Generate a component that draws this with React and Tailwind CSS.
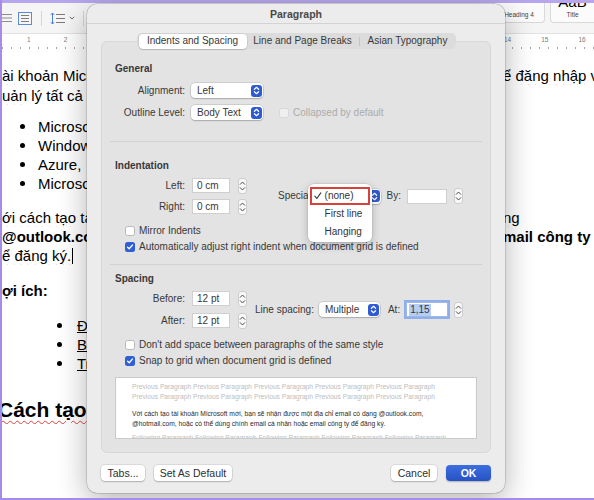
import React from "react";

const sans = "font-['Liberation_Sans',Arial,sans-serif]";
const wavy = "underline decoration-wavy decoration-[#e0443e] decoration-1 underline-offset-[3px]";

// little ^/v stepper that sits next to numeric fields
function Stepper() {
    return (
        <div className="flex h-[16px] w-[9px] shrink-0 items-center justify-center rounded-[3px] border border-[#cdcdcd] bg-[#f8f8f8]">
            <svg width="7" height="12" viewBox="0 0 7 12" fill="none" stroke="#4d4d4d" strokeWidth="1" strokeLinecap="round" strokeLinejoin="round">
                <path d="M1.3 4.3 3.5 2 5.7 4.3" />
                <path d="M1.3 7.7 3.5 10 5.7 7.7" />
            </svg>
        </div>
    );
}

function Arrows() {
    return (
        <span className="flex h-[12px] w-[11px] shrink-0 items-center justify-center rounded-[3px] bg-[#2e5bd1]">
            <svg width="7" height="9" viewBox="0 0 7 9" fill="none" stroke="#fff" strokeWidth="1.2" strokeLinecap="round" strokeLinejoin="round">
                <path d="M1.4 3.3 3.5 1.3 5.6 3.3" />
                <path d="M1.4 5.7 3.5 7.7 5.6 5.7" />
            </svg>
        </span>
    );
}

function Select({ value, className = "", children }) {
    return (
        <div className={`relative flex h-[15px] shrink-0 items-center justify-between rounded-[4px] bg-white pl-[6px] pr-[1px] shadow-[0_0_0_0.5px_rgba(0,0,0,0.18),0_1px_1.5px_rgba(0,0,0,0.18)] ${className}`}>
            <span>{value}</span>
            <Arrows />
            {children}
        </div>
    );
}

function Field({ value, className = "" }) {
    return (
        <div className={`flex h-[15px] shrink-0 items-center border border-[#cfcfcf] bg-white pl-[4px] ${className}`}>{value}</div>
    );
}

function Check({ on, off }) {
    if (on) {
        return (
            <span className="flex h-[10px] w-[10px] shrink-0 items-center justify-center rounded-[2.5px] bg-[#2f5fd6]">
                <svg width="8" height="8" viewBox="0 0 8 8" fill="none" stroke="#fff" strokeWidth="1.4" strokeLinecap="round" strokeLinejoin="round">
                    <path d="M1.6 4.2 3.2 5.8 6.4 2.1" />
                </svg>
            </span>
        );
    }
    return <span className={`block h-[10px] w-[10px] shrink-0 rounded-[2.5px] border ${off ? "border-[#d8d8d8] bg-[#efefef]" : "border-[#b8b8b8] bg-white"}`} />;
}

function Label({ children }) {
    return <span className="w-[75px] shrink-0 text-right">{children}</span>;
}

function NumRow({ label, value }) {
    return (
        <div className="flex h-[15px] items-center">
            <Label>{label}</Label>
            <Field value={value} className="ml-[7px] w-[38px]" />
            <div className="ml-[8px]"><Stepper /></div>
        </div>
    );
}

function Btn({ children, className = "" }) {
    return (
        <div className={`flex h-[16px] items-center justify-center rounded-[4px] bg-white text-[10.5px] text-[#2e2e2e] shadow-[0_0_0_0.5px_rgba(0,0,0,0.15),0_1px_1.5px_rgba(0,0,0,0.2)] ${className}`}>
            {children}
        </div>
    );
}

function Row({ left, right, h = "h-[19px]", className = "" }) {
    return (
        <div className={`flex items-center ${h} ${className}`}>
            <div className="w-[100px] shrink-0 overflow-hidden whitespace-nowrap">{left}</div>
            <div className="ml-auto w-[91px] shrink-0 overflow-hidden whitespace-nowrap">{right}</div>
        </div>
    );
}

function Bullet({ children, indent = "pl-[18px]", gap = "ml-[13px]" }) {
    return (
        <div className={`flex items-center ${indent}`}>
            <span className="h-[5px] w-[5px] shrink-0 rounded-full bg-black" />
            <span className={`shrink-0 ${gap}`}>{children}</span>
        </div>
    );
}

const prev = "Previous Paragraph Previous Paragraph Previous Paragraph Previous Paragraph Previous Paragraph";
const follow = "Following Paragraph Following Paragraph Following Paragraph Following Paragraph Following Paragraph";

export default function App() {
    return (
        <div className={`relative h-[500px] w-[594px] overflow-hidden border-b-2 border-l-2 border-[#a68ce8] bg-white ${sans}`}>
            <div className="h-[3px] bg-[#b7a5ee]" />

            {/* ribbon */}
            <div className="flex h-[30px] items-center bg-[#f5f5f5]">
                <svg width="12" height="10" viewBox="0 0 12 10" className="-ml-[2px]" stroke="#8c8c8c" strokeWidth="1">
                    <path d="M0 1.5h12M0 5h12M0 8.5h12" />
                </svg>
                <svg width="14" height="13" viewBox="0 0 14 13" className="ml-[6px]" fill="none">
                    <rect x="0.5" y="0.5" width="13" height="12" stroke="#5b8ad9" />
                    <path d="M3 3.5h8M3 6.5h8M3 9.5h8" stroke="#7a7a7a" />
                </svg>
                <span className="ml-[9px] h-[15px] w-px bg-[#d6d6d6]" />
                <svg width="15" height="13" viewBox="0 0 15 13" className="ml-[8px]" fill="none">
                    <path d="M2.5 1v11M0.8 2.8 2.5 1 4.2 2.8M0.8 10.2 2.5 12 4.2 10.2" stroke="#4a7fd6" />
                    <path d="M6 2.5h9M6 6.5h9M6 10.5h9" stroke="#7a7a7a" />
                </svg>
                <svg width="6" height="4" viewBox="0 0 6 4" className="ml-[4px]" fill="none">
                    <path d="M0.8 0.8 3 3 5.2 0.8" stroke="#6a6a6a" />
                </svg>
                <span className="ml-[8px] h-[15px] w-px bg-[#d6d6d6]" />

                <div className="ml-auto flex h-full items-start">
                    <div className="flex h-[20px] w-[52px] items-end justify-center rounded-b-[4px] border-x border-b border-[#d8d8d8] bg-[#fbfbfb] pb-[2px] text-[6.5px] text-[#444]">Heading 4</div>
                    <div className="ml-[5px] flex h-[20px] w-[44px] flex-col items-center overflow-hidden rounded-bl-[4px] border-b border-l border-[#d8d8d8] bg-[#fbfbfb]">
                        <span className="-mt-[9px] text-[15px] leading-[16px] text-black">AaB</span>
                        <span className="text-[6.5px] text-[#444]">Title</span>
                    </div>
                </div>
            </div>

            {/* ruler */}
            <div className="flex h-[14px] border-t border-[#e2e2e2] bg-white text-[6.5px] text-[#7a7a7a]">
                <div className="relative w-[100px]">
                    <div className="flex pt-[1px]">
                        <span className="ml-[25px]">1</span>
                        <span className="ml-[33px]">2</span>
                    </div>
                    <div className="mt-[2px] h-[2px] bg-[repeating-linear-gradient(90deg,#a5a5a5_0_1px,transparent_1px_9px)]" />
                </div>
                <div className="ml-auto w-[91px]">
                    <div className="flex pt-[1px]">
                        <span className="ml-[1px]">14</span>
                        <span className="ml-[30px]">15</span>
                        <span className="ml-[30px]">16</span>
                    </div>
                    <div className="mt-[2px] h-[2px] bg-[repeating-linear-gradient(90deg,#a5a5a5_0_1px,transparent_1px_9px)]" />
                </div>
            </div>

            {/* document */}
            <div className="pt-[18px] text-[15px] leading-[19px] text-black">
                <Row h="h-[20px]" left={<span><span className={wavy}>ài khoản</span> Microsoft</span>} right={<span>ể <span className={wavy}>đăng nhập</span> vào</span>} />
                <Row h="h-[20px]" left={<span><span className={wavy}>uản</span> lý tất cả các</span>} />
                <Row className="mt-[12px]" left={<Bullet>Microsoft</Bullet>} />
                <Row left={<Bullet>Windows</Bullet>} />
                <Row left={<Bullet>Azure,</Bullet>} />
                <Row left={<Bullet>Microsoft</Bullet>} />
                <Row className="mt-[15px]" left={<span><span className={wavy}>ới cách tạo</span> tài</span>} right={<span className={wavy}>ng</span>} />
                <Row left={<b>@outlook.com</b>} right={<b>mail <span className={wavy}>công</span> ty</b>} />
                <Row left={<span className="flex items-center"><span className={wavy}>ể đăng ký.</span><span className="ml-[1px] h-[16px] w-px bg-black" /></span>} />
                <Row className="mt-[16px]" left={<b><span className={wavy}>ợi</span> ích:</b>} />
                <Row className="mt-[16px]" left={<Bullet indent="pl-[55px]" gap="ml-[15px]"><span className="underline">Đăng</span></Bullet>} />
                <Row left={<Bullet indent="pl-[55px]" gap="ml-[15px]"><span className="underline">Bảo</span></Bullet>} />
                <Row left={<Bullet indent="pl-[55px]" gap="ml-[15px]"><span className="underline">Truy</span></Bullet>} />
                <Row h="h-[28px]" className="mt-[23px]" left={<b className="-ml-[4px] block text-[21px] leading-[28px]"><span className={wavy}>Cách tạo</span> tài</b>} />
            </div>

            {/* Paragraph sheet */}
            <div className="absolute left-[85px] top-[4px] flex h-[489px] w-[418px] flex-col rounded-[10px] bg-[#ececec] text-[10px] leading-[12px] text-[#383838] shadow-[0_8px_30px_rgba(0,0,0,0.3),0_0_0_0.5px_rgba(0,0,0,0.25)]">
                <div className="flex h-[20px] items-center justify-center border-b border-[#d3d3d3] text-[10.5px] font-bold text-[#484848]">Paragraph</div>

                <div className="flex flex-col px-[14px] pt-[9px]">
                    <div className="relative z-10 -mb-[8px] flex justify-center">
                        <div className="flex h-[16px] items-center rounded-[5px] bg-[#dcdcdc] pl-[2px]">
                            <div className="flex h-[15px] w-[108px] items-center justify-center rounded-[4px] bg-white shadow-[0_0_0_0.5px_rgba(0,0,0,0.12),0_1px_1px_rgba(0,0,0,0.15)]">Indents and Spacing</div>
                            <div className="flex w-[112px] justify-center">Line and Page Breaks</div>
                            <span className="h-[9px] w-px bg-[#c4c4c4]" />
                            <div className="flex w-[96px] justify-center">Asian Typography</div>
                        </div>
                    </div>

                    <div className="flex h-[412px] flex-col rounded-[6px] border border-[#d7d7d7] bg-[#e3e3e3] px-[8px]">
                        <div className="mt-[21px] pl-[5px] font-bold">General</div>
                        <div className="mt-[8px] flex h-[15px] items-center">
                            <Label>Alignment:</Label>
                            <Select value="Left" className="ml-[6px] w-[72px]" />
                        </div>
                        <div className="mt-[7px] flex h-[15px] items-center">
                            <Label>Outline Level:</Label>
                            <Select value="Body Text" className="ml-[6px] w-[72px]" />
                            <span className="ml-[16px]"><Check off /></span>
                            <span className="ml-[4px] text-[#ababab]">Collapsed by default</span>
                        </div>

                        <div className="mt-[21px] h-px bg-[#d2d2d2]" />

                        <div className="mt-[18px] pl-[5px] font-bold">Indentation</div>
                        <div className="mt-[6px] flex items-center">
                            <div className="flex flex-col gap-[6px]">
                                <NumRow label="Left:" value="0 cm" />
                                <NumRow label="Right:" value="0 cm" />
                            </div>
                            <span className="ml-[31px]">Special:</span>
                            <Select value="(none)" className="ml-[5px] w-[62px]">
                                <div className="absolute -left-[11px] -top-[5px] z-20 w-[64px] rounded-[6px] bg-white pb-[1px] pt-[3px] text-[#333] shadow-[0_3px_10px_rgba(0,0,0,0.22),0_0_0_0.5px_rgba(0,0,0,0.12)]">
                                    <div className="mx-[2px] flex h-[18px] items-center border-2 border-[#d8423a] pl-[2px]">
                                        <svg width="11" height="8" viewBox="0 0 11 8" fill="none" stroke="#333" strokeWidth="1.1" strokeLinecap="round" strokeLinejoin="round">
                                            <path d="M0.8 4.2 2.8 6.5 6.8 0.9" />
                                        </svg>
                                        <span>(none)</span>
                                    </div>
                                    <div className="flex h-[18px] items-center pl-[17px]">First line</div>
                                    <div className="flex h-[18px] items-center pl-[17px]">Hanging</div>
                                </div>
                            </Select>
                            <span className="ml-[6px]">By:</span>
                            <Field value="" className="ml-[6px] w-[40px]" />
                            <div className="ml-[7px]"><Stepper /></div>
                        </div>

                        <div className="mt-[11px] flex items-center gap-[4px] pl-[15px]">
                            <Check />
                            <span>Mirror Indents</span>
                        </div>
                        <div className="mt-[4px] flex items-center gap-[4px] pl-[15px]">
                            <Check on />
                            <span>Automatically adjust right indent when document grid is defined</span>
                        </div>

                        <div className="mt-[11px] h-px bg-[#d2d2d2]" />

                        <div className="mt-[8px] pl-[5px] font-bold">Spacing</div>
                        <div className="mt-[6px] flex items-center">
                            <div className="flex flex-col gap-[7px]">
                                <NumRow label="Before:" value="12 pt" />
                                <NumRow label="After:" value="12 pt" />
                            </div>
                            <span className="ml-[8px]">Line spacing:</span>
                            <Select value="Multiple" className="ml-[5px] w-[61px]" />
                            <span className="ml-[8px]">At:</span>
                            <div className="ml-[6px] flex h-[15px] w-[42px] items-center border border-[#9fb8ea] bg-white pl-[2px] outline outline-2 outline-[#8eaeec]">
                                <span className="bg-[#b6cdf5] px-[1px]">1,15</span>
                            </div>
                            <div className="ml-[6px]"><Stepper /></div>
                        </div>

                        <div className="mt-[11px] flex items-center gap-[4px] pl-[15px]">
                            <Check />
                            <span>Don't add space between paragraphs of the same style</span>
                        </div>
                        <div className="mt-[4px] flex items-center gap-[4px] pl-[15px]">
                            <Check on />
                            <span>Snap to grid when document grid is defined</span>
                        </div>

                        <div className="mx-[5px] mt-[10px] h-[62px] overflow-hidden border border-[#c9c9c9] bg-white pl-[16px] pt-[4px] text-[6.7px] leading-[10px] whitespace-nowrap">
                            <div className="text-[#bdbdbd]">{prev}</div>
                            <div className="text-[#bdbdbd]">{prev}</div>
                            <div className="mt-[7px] text-[#2a2a2a]">Với cách tạo tài khoản Microsoft mới, bạn sẽ nhận được một địa chỉ email có dạng @outlook.com,</div>
                            <div className="text-[#2a2a2a]">@hotmail.com, hoặc có thể dùng chính email cá nhân hoặc email công ty để đăng ký.</div>
                            <div className="mt-[4px] text-[#bdbdbd]">{follow}</div>
                        </div>
                    </div>

                    <div className="mt-[12px] flex h-[16px] items-center">
                        <Btn className="w-[44px]">Tabs...</Btn>
                        <Btn className="ml-[9px] w-[78px]">Set As Default</Btn>
                        <Btn className="ml-auto w-[46px]">Cancel</Btn>
                        <div className="ml-[9px] flex h-[16px] w-[45px] items-center justify-center rounded-[4px] bg-gradient-to-b from-[#3c6ee0] to-[#2752c4] text-[10.5px] font-bold text-white shadow-[0_1px_1.5px_rgba(0,0,0,0.25)]">OK</div>
                    </div>
                </div>
            </div>
        </div>
    );
}
